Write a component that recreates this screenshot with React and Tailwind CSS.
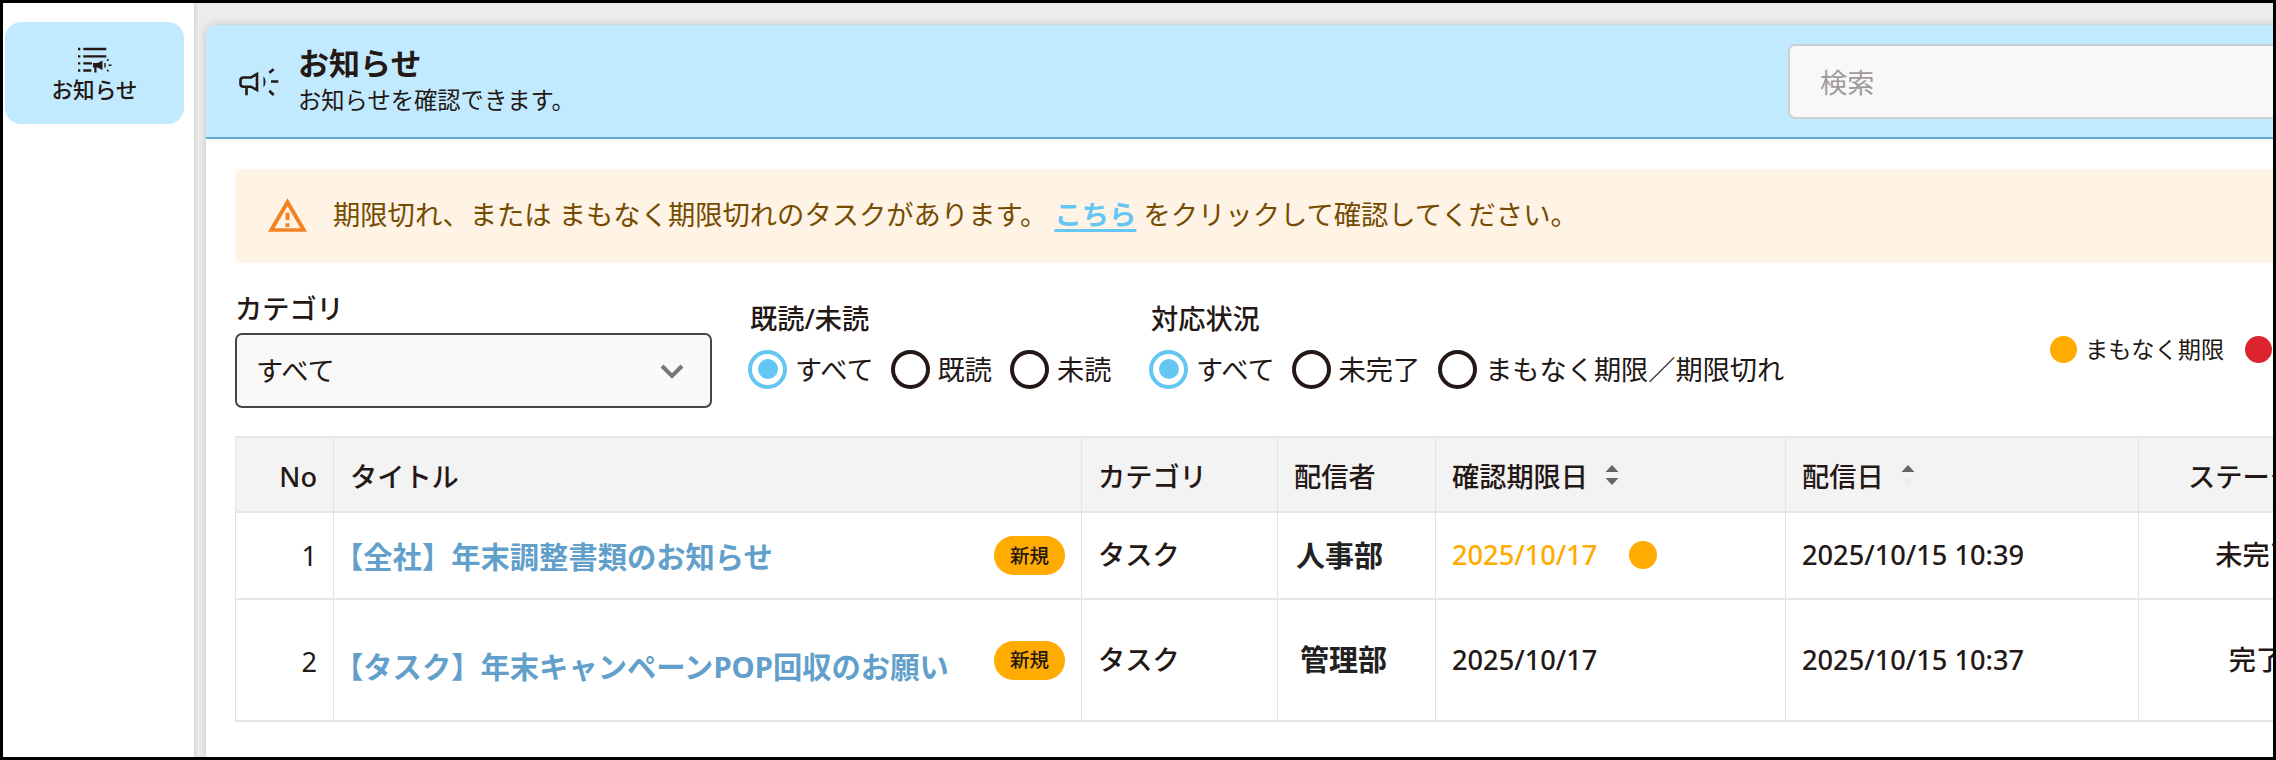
import React, { useState } from "react";

const readOptions = [
  { value: "all", label: "すべて", gap: "mr-[17px]" },
  { value: "read", label: "既読", gap: "mr-[18px]" },
  { value: "unread", label: "未読", gap: "" },
];

const statusOptions = [
  { value: "all", label: "すべて", gap: "mr-[17px]" },
  { value: "open", label: "未完了", gap: "mr-[18px]" },
  { value: "due", label: "まもなく期限／期限切れ", gap: "" },
];

const notices = [
  {
    no: 1,
    title: "【全社】年末調整書類のお知らせ",
    category: "タスク",
    sender: "人事部",
    due: "2025/10/17",
    dueSoon: true,
    sentAt: "2025/10/15 10:39",
    status: "未完了",
    height: "h-[87px]",
    titleClass: "pt-[2px]",
    senderClass: "pl-[18px]",
    noClass: "pt-[2px]",
  },
  {
    no: 2,
    title: "【タスク】年末キャンペーンPOP回収のお願い",
    category: "タスク",
    sender: "管理部",
    due: "2025/10/17",
    dueSoon: false,
    sentAt: "2025/10/15 10:37",
    status: "完了",
    height: "h-[122px]",
    titleClass: "pt-[14px]",
    senderClass: "pl-[22px]",
    noClass: "pt-[4px]",
  },
];

const NoticeListIcon = () => (
  <svg width="34" height="28" viewBox="0 0 34 28" fill="none" stroke="#231815" strokeWidth="2.300">
    <path d="M5.300 3h23M5.300 10.300h23M5.300 17.300h8.700M5.300 24.500h8" />
    <path d="M0 3h2.300M0 10.300h2.300M0 17.300h2.300M0 24.500h2.300" />
    <path d="M15 17h4.500l5-2.500v9.500l-5-2.500h-1v5h-2.200v-5H15z" fill="#231815" stroke="none" />
    <path d="M27 17v4.500M29 14.800l1.600-1.600M30.500 19.200h3M29 23.800l1.600 1.600" strokeWidth="1.400" />
  </svg>
);

const MegaphoneIcon = () => (
  <svg width="40" height="32" viewBox="0 0 40 32" fill="none" stroke="#231815" strokeWidth="2.600">
    <path d="M18 8v16l-6-3.300H4.500q-3 0-3-2.700v-3.500q0-3 3-3H12zM7.500 20.700v8.500" />
    <path d="M24.500 10q4 5.700 0 11.500z" fill="#231815" stroke="none" />
    <path d="M30.300 6.800l4.400-3.600M32 15.500h7.300M30.300 24.700l4.400 4.300" />
  </svg>
);

const WarningIcon = () => (
  <svg width="39" height="34" viewBox="0 0 22 19" className="mb-[3px]" fill="#f58220">
    <path d="M0 19h22L11 0 0 19zm12.100-2.800h-2.200v-2.100h2.200v2.100zm0-3.900h-2.200V8.200h2.200v4.100zM3.700 17L11 4.400 18.300 17H3.700z" fillRule="evenodd" />
  </svg>
);

const SortIcon = ({ active }) => (
  <svg width="14" height="20" viewBox="0 0 14 20" fill="#666">
    <path d="M0.500 7L7 0l6.500 7z" />
    <path d="M0.500 13h13L7 20z" fill={active ? "#ececec" : "#666"} />
  </svg>
);

const Radio = ({ option, name, checked, onChange }) => (
  <label className={`flex items-center ${option.gap}`}>
    <input
      type="radio"
      name={name}
      checked={checked}
      onChange={() => onChange(option.value)}
      className="sr-only"
    />
    <span
      className={`flex size-[39px] shrink-0 items-center justify-center rounded-full border-4 ${
        checked ? "border-[#64c6f3]" : "border-[#231815]"
      }`}
    >
      {checked && <span className="size-[20px] rounded-full bg-[#64c6f3]" />}
    </span>
    <span className="ml-[8px] pt-[2px] whitespace-nowrap">{option.label}</span>
  </label>
);

const RadioGroup = ({ title, name, options, className }) => {
  const [value, setValue] = useState("all");
  return (
    <div className={className}>
      <div className="pl-[2px] leading-[40px] font-medium">{title}</div>
      <div className="mt-[10px] flex h-10 items-center">
        {options.map((o) => (
          <Radio key={o.value} option={o} name={name} checked={value === o.value} onChange={setValue} />
        ))}
      </div>
    </div>
  );
};

const cell = "border-r border-[#e2e2e2] px-4";

const App = () => {
  return (
    <div className="flex h-[760px] w-[2276px] overflow-hidden border-[3px] border-black bg-[#ececec] font-['Noto_Sans','Noto_Sans_CJK_JP',sans-serif] text-[27.200px] text-[#231815]">
      <aside className="z-10 w-[191px] shrink-0 bg-white pt-[19px] pl-[2px] shadow-[1px_0_4px_rgba(0,0,0,0.15)]">
        <button className="flex h-[102px] w-[179px] flex-col items-center rounded-[16px] bg-[#c2eaff] pt-[24px]">
          <NoticeListIcon />
          <span className="mt-[2px] text-[21.600px] leading-[28px] font-medium">お知らせ</span>
        </button>
      </aside>

      <main className="mt-[22px] ml-[12px] w-[2400px] shrink-0 rounded-tl-[9px] bg-white shadow-[0_0_8px_rgba(0,0,0,0.18)]">
        <header className="flex h-[114px] items-center rounded-tl-[9px] border-b-2 border-[#5fa9cb] bg-[#c2eaff]">
          <div className="ml-[33px] w-[59px] pt-[2px]">
            <MegaphoneIcon />
          </div>
          <div className="w-[1490px]">
            <h1 className="text-[31px] leading-[36px] font-bold">お知らせ</h1>
            <p className="pt-px text-[23.300px] leading-[36px]">お知らせを確認できます。</p>
          </div>
          <input
            placeholder="検索"
            className="h-[75px] w-[560px] rounded-[7px] border-2 border-[#cbcfd1] bg-[#f8f8f8] px-[30px] pt-[2px] outline-none placeholder:text-[#9f9b9a]"
          />
        </header>

        <div className="pl-[29px]">
          <div className="mt-[30px] flex h-[94px] items-center rounded-[7px] bg-[#fff3e6] pl-[33px] text-[#754c00]">
            <WarningIcon />
            <p className="-mt-px ml-[26px] text-[27.300px] whitespace-nowrap">
              期限切れ、または まもなく期限切れのタスクがあります。{" "}
              <a
                href="#tasks"
                className="font-bold text-[#64c6f3] underline decoration-[2.500px] underline-offset-[4px]"
              >
                こちら
              </a>{" "}
              をクリックして確認してください。
            </p>
          </div>

          <div className="flex h-[173px] items-start">
            <div className="w-[477px] pt-[26px]">
              <div className="leading-[40px] font-medium">カテゴリ</div>
              <button className="mt-[4px] flex h-[75px] w-[477px] items-center justify-between rounded-[7px] border-2 border-[#4a4543] bg-[#f9f9f9] pt-[2px] pr-[26px] pl-[19px]">
                すべて
                <svg width="24" height="15" viewBox="0 0 24 15" fill="none" stroke="#777" strokeWidth="4">
                  <path d="M2 2l10 10L22 2" />
                </svg>
              </button>
            </div>
            <RadioGroup title="既読/未読" name="read" options={readOptions} className="ml-[36px] w-[401px] pt-[36px]" />
            <RadioGroup title="対応状況" name="status" options={statusOptions} className="w-[901px] pt-[36px]" />
            <div className="flex items-center pt-[69px] text-[23.200px] leading-[34px] whitespace-nowrap">
              <span className="mr-[8px] size-[27px] rounded-full bg-[#ffab00]" />
              まもなく期限
              <span className="mr-[9px] ml-[21px] size-[27px] rounded-full bg-[#dc2430]" />
              期限切れ
            </div>
          </div>

          <table className="w-[2138px] table-fixed border-collapse border border-[#e2e2e2] whitespace-nowrap">
            <colgroup>
              <col className="w-[98px]" />
              <col className="w-[748px]" />
              <col className="w-[196px]" />
              <col className="w-[158px]" />
              <col className="w-[350px]" />
              <col className="w-[353px]" />
              <col className="w-[235px]" />
            </colgroup>
            <thead>
              <tr className="h-[75px] border-t-2 border-b-2 border-[#e6e6e6] bg-[#f3f3f3] text-left [&>th]:pt-[5px] [&>th]:font-medium">
                <th className={`${cell} text-right`}>No</th>
                <th className={cell}>タイトル</th>
                <th className={cell}>カテゴリ</th>
                <th className={cell}>配信者</th>
                <th className={cell}>
                  <div className="flex items-center gap-[17px]">
                    確認期限日
                    <span className="-mt-[4px]">
                      <SortIcon />
                    </span>
                  </div>
                </th>
                <th className={cell}>
                  <div className="flex items-center gap-[17px]">
                    配信日
                    <span className="-mt-[4px]">
                      <SortIcon active />
                    </span>
                  </div>
                </th>
                <th className={`${cell} text-center`}>ステータス</th>
              </tr>
            </thead>
            <tbody>
              {notices.map((n) => (
                <tr key={n.no} className={`${n.height} border-b-2 border-[#e6e6e6]`}>
                  <td className={`${cell} text-right ${n.noClass}`}>{n.no}</td>
                  <td className={cell}>
                    <div className="flex items-center justify-between">
                      <a href="#notice" className={`-ml-[16px] text-[29.300px] leading-[40px] font-bold text-[#629fca] ${n.titleClass}`}>
                        {n.title}
                      </a>
                      <span className="flex h-[39px] w-[71px] items-center justify-center rounded-full bg-[#ffab00] text-[19.500px] font-medium">
                        新規
                      </span>
                    </div>
                  </td>
                  <td className={`${cell} font-medium`}>{n.category}</td>
                  <td className={`border-r border-[#e2e2e2] text-[29px] font-bold text-[#222] ${n.senderClass}`}>{n.sender}</td>
                  <td className={`${cell} font-medium`}>
                    <div className="flex items-center">
                      <span className={n.dueSoon ? "text-[#ffab00]" : ""}>{n.due}</span>
                      {n.dueSoon && <span className="ml-[32px] size-[28px] rounded-full bg-[#ffab00]" />}
                    </div>
                  </td>
                  <td className={`${cell} font-medium`}>{n.sentAt}</td>
                  <td className={`${cell} text-center font-medium`}>{n.status}</td>
                </tr>
              ))}
            </tbody>
          </table>
        </div>
      </main>
    </div>
  );
};

export default App;
